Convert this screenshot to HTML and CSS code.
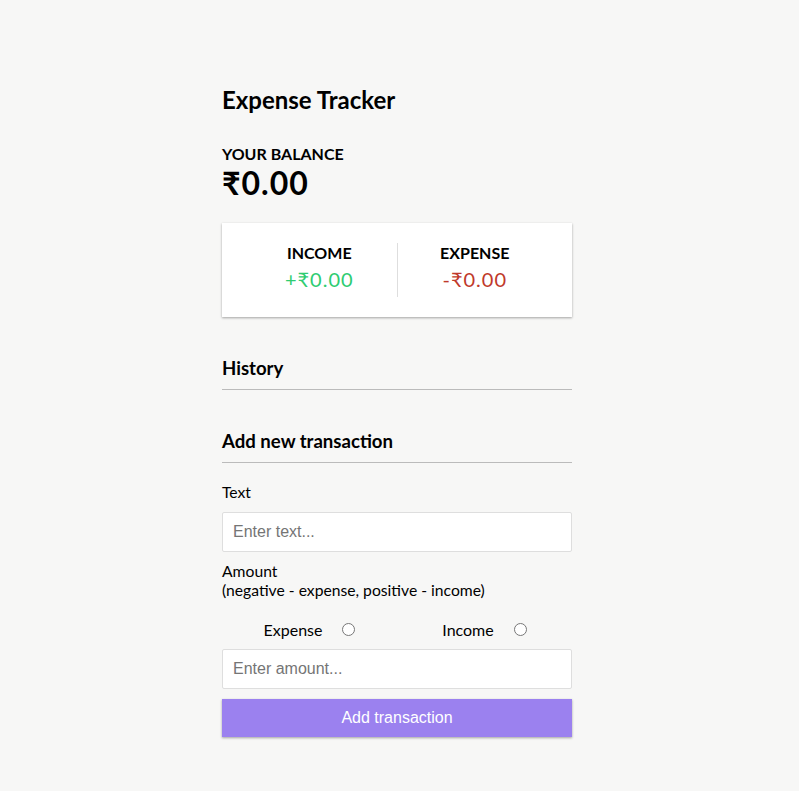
FILE: index.html
```html
<!DOCTYPE html>
<html lang="en">
<head>
<meta charset="UTF-8">
<title>Expense Tracker</title>
<link rel="stylesheet" href="styles.css">
</head>
<body>
  <div class="container">
    <h2 class="title">Expense Tracker</h2>
    <h4 class="caps">Your Balance</h4>
    <h1 class="balance">₹0.00</h1>

    <div class="inc-exp">
      <div class="inc-exp-col divided">
        <h4 class="caps">Income</h4>
        <p class="money plus">+₹0.00</p>
      </div>
      <div class="inc-exp-col">
        <h4 class="caps">Expense</h4>
        <p class="money minus">-₹0.00</p>
      </div>
    </div>

    <h3 class="section">History</h3>
    <ul class="list"></ul>

    <h3 class="section">Add new transaction</h3>
    <form class="form">
      <div class="form-control">
        <label class="field-label" for="text">Text</label>
        <input class="field" type="text" id="text" placeholder="Enter text...">
      </div>
      <div class="form-control">
        <label class="field-label" for="amount">Amount <br>(negative - expense, positive - income)</label>
        <div class="radio-row">
          <label class="radio-opt">Expense <input class="radio" type="radio" name="kind"></label>
          <label class="radio-opt">Income <input class="radio" type="radio" name="kind"></label>
        </div>
        <input class="field" type="number" id="amount" placeholder="Enter amount...">
      </div>
      <button class="btn" type="button">Add transaction</button>
    </form>
  </div>
</body>
</html>
```

FILE: styles.css
```css
* { box-sizing: border-box; }

body {
  background-color: #f7f7f6;
  margin: 0;
  font-family: Lato, "Noto Sans", sans-serif;
  color: #000;
  display: flex;
  justify-content: center;
  padding: 86px 5px 0 0;
}

.container {
  width: 350px;
}

.title {
  font-size: 24px;
  margin: 0 0 30px;
  line-height: 28px;
}

.caps {
  margin: 0;
  font-size: 16px;
  text-transform: uppercase;
  line-height: 19px;
}

.balance {
  margin: 0;
  font-size: 32px;
  line-height: 40px;
  letter-spacing: 1px;
}

.inc-exp {
  background-color: #fff;
  box-shadow: 0 1px 3px rgba(0,0,0,0.12), 0 1px 2px rgba(0,0,0,0.24);
  padding: 20px;
  display: flex;
  margin: 20px 0;
}

.inc-exp-col {
  flex: 1;
  text-align: center;
}

.divided {
  border-right: 1px solid #dedede;
}

.money {
  font-size: 20px;
  letter-spacing: 1px;
  margin: 5px 0;
  line-height: 25px;
}

.plus { color: #2ecc71; }
.minus { color: #c0392b; }

.section {
  font-size: 18.6px;
  line-height: 22px;
  border-bottom: 1px solid #bbb;
  padding-bottom: 10px;
  margin: 40px 0 10px;
}

.list {
  list-style: none;
  padding: 0;
  margin: 0;
}

.form {
  margin: 0;
}

.field-label {
  display: inline-block;
  margin: 10px 0;
  font-size: 15.7px;
  line-height: 19px;
}

.field {
  border: 1px solid #dedede;
  border-radius: 2px;
  display: block;
  font-size: 16px;
  font-family: "Liberation Sans", Arial, sans-serif;
  padding: 10px;
  width: 100%;
  background: #fff;
}

.field::placeholder { color: #757575; }

.radio-row {
  display: flex;
  height: 39px;
  align-items: center;
}

.radio-opt {
  flex: 1;
  display: flex;
  justify-content: center;
  align-items: center;
  gap: 20px;
  font-size: 16px;
}

.radio {
  margin: 0;
  width: 13px;
  height: 13px;
}

.btn {
  cursor: pointer;
  background-color: #9b81ef;
  box-shadow: 0 1px 3px rgba(0,0,0,0.12), 0 1px 2px rgba(0,0,0,0.24);
  color: #fff;
  border: 0;
  display: block;
  font-size: 16px;
  font-family: "Liberation Sans", Arial, sans-serif;
  margin: 10px 0 30px;
  padding: 10px;
  width: 100%;
  line-height: 18px;
}
```
